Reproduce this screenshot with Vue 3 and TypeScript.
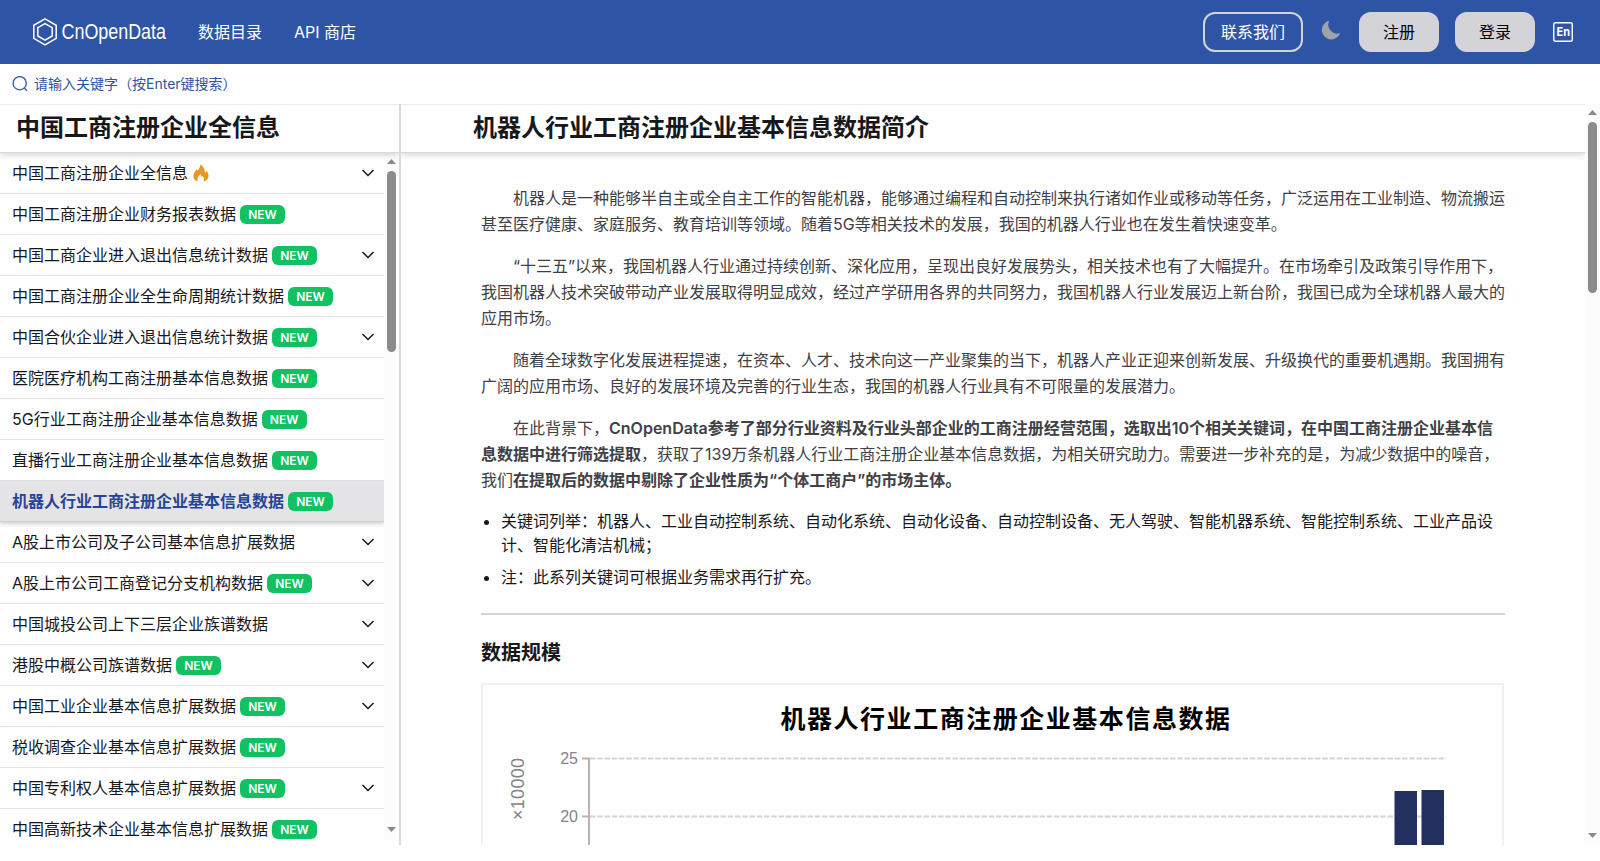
<script setup lang="ts">
interface Entry {
  name: string
  isNew?: boolean
  hot?: boolean
  expandable?: boolean
  active?: boolean
}

const entries: Entry[] = [
  { name: '中国工商注册企业全信息', hot: true, expandable: true },
  { name: '中国工商注册企业财务报表数据', isNew: true },
  { name: '中国工商企业进入退出信息统计数据', isNew: true, expandable: true },
  { name: '中国工商注册企业全生命周期统计数据', isNew: true },
  { name: '中国合伙企业进入退出信息统计数据', isNew: true, expandable: true },
  { name: '医院医疗机构工商注册基本信息数据', isNew: true },
  { name: '5G行业工商注册企业基本信息数据', isNew: true },
  { name: '直播行业工商注册企业基本信息数据', isNew: true },
  { name: '机器人行业工商注册企业基本信息数据', isNew: true, active: true },
  { name: 'A股上市公司及子公司基本信息扩展数据', expandable: true },
  { name: 'A股上市公司工商登记分支机构数据', isNew: true, expandable: true },
  { name: '中国城投公司上下三层企业族谱数据', expandable: true },
  { name: '港股中概公司族谱数据', isNew: true, expandable: true },
  { name: '中国工业企业基本信息扩展数据', isNew: true, expandable: true },
  { name: '税收调查企业基本信息扩展数据', isNew: true },
  { name: '中国专利权人基本信息扩展数据', isNew: true, expandable: true },
  { name: '中国高新技术企业基本信息扩展数据', isNew: true },
]
</script>

<template>
  <div class="page" lang="zh-CN">
    <header class="topbar">
      <svg class="logo" width="140" height="32" viewBox="0 0 140 32" fill="none">
        <path d="M13 2.900 24.200 9.300v13.100L13 28.800 1.800 22.400V9.300z" stroke="#fff" stroke-width="1.500" />
        <path d="M13 7.600 20.200 11.700v8.300L13 24.100 5.800 20v-8.300z" stroke="#fff" stroke-width="1.500" />
        <text x="29.500" y="23.300" font-size="22" fill="#fff" textLength="104.500" lengthAdjust="spacingAndGlyphs">CnOpenData</text>
      </svg>
      <nav class="nav">
        <a>数据目录</a>
        <a>API 商店</a>
      </nav>
      <div class="actions">
        <button class="contact">联系我们</button>
        <svg class="moon" width="20" height="20" viewBox="0 0 20 20">
          <path d="M8.300.8A9.400 9.400 0 1 0 19.200 13 8.800 8.800 0 0 1 8.300.8z" fill="#a1a1aa" />
        </svg>
        <button class="solid">注册</button>
        <button class="solid">登录</button>
        <svg class="lang" width="20" height="20" viewBox="0 0 20 20">
          <rect x=".75" y=".75" width="18.500" height="18.500" rx="1.500" fill="none" stroke="#fff" stroke-width="1.400" />
          <text x="3.500" y="14.300" font-size="11.500" font-weight="700" fill="#fff" textLength="13.500" lengthAdjust="spacingAndGlyphs">En</text>
        </svg>
      </div>
    </header>

    <div class="search">
      <svg width="17" height="17" viewBox="0 0 17 17" fill="none" stroke="#2e55a5" stroke-width="1.300">
        <circle cx="7.700" cy="7.200" r="6.600" />
        <path d="m12.300 12.100 2.700 2.700" />
      </svg>
      <span>请输入关键字（按Enter键搜索）</span>
    </div>

    <div class="columns">
      <aside class="sidebar">
        <h2 class="side-title">中国工商注册企业全信息</h2>
        <div class="scroll-area">
          <ul class="entries">
            <li v-for="e in entries" :key="e.name" :class="{ active: e.active }">
              <span class="name">{{ e.name }}</span>
              <svg v-if="e.hot" class="fire" width="16" height="18" viewBox="0 0 16 18">
                <path d="M7.200.2c.4 2.900-1.100 4.500-2.500 6.300L3.800 5.300C2.100 7.400.4 9.300.4 11.900c0 2.800 1.600 4.900 4.300 5.700-.9-2.700-.2-4.800 3-7.500.1 1.700.6 2.500 1.300 2.800l.8-.8c1.200 1.800 1.500 3.600.9 5.500 2.900-.8 4.800-2.900 4.800-5.700 0-2-.8-3.600-2-5.100-.2 1-.7 1.700-1.400 2.200C12 5.400 10.400 2 7.200.2z" fill="#eb961e" />
              </svg>
              <b v-if="e.isNew" class="tag">NEW</b>
              <svg v-if="e.expandable" class="chevron" width="14" height="8" viewBox="0 0 14 8">
                <path d="m1.500 1 5.500 5.500L12.500 1" fill="none" stroke="#18181b" stroke-width="1.500" />
              </svg>
            </li>
          </ul>
          <div class="scrollbar side-bar"><i class="up" /><i class="thumb" /><i class="down" /></div>
        </div>
      </aside>

      <main class="main">
        <div class="body">
          <h1 class="title">机器人行业工商注册企业基本信息数据简介</h1>
          <article class="article">
            <p>机器人是一种能够半自主或全自主工作的智能机器，能够通过编程和自动控制来执行诸如作业或移动等任务，广泛运用在工业制造、物流搬运甚至医疗健康、家庭服务、教育培训等领域。随着5G等相关技术的发展，我国的机器人行业也在发生着快速变革。</p>
            <p>“十三五”以来，我国机器人行业通过持续创新、深化应用，呈现出良好发展势头，相关技术也有了大幅提升。在市场牵引及政策引导作用下，我国机器人技术突破带动产业发展取得明显成效，经过产学研用各界的共同努力，我国机器人行业发展迈上新台阶，我国已成为全球机器人最大的应用市场。</p>
            <p>随着全球数字化发展进程提速，在资本、人才、技术向这一产业聚集的当下，机器人产业正迎来创新发展、升级换代的重要机遇期。我国拥有广阔的应用市场、良好的发展环境及完善的行业生态，我国的机器人行业具有不可限量的发展潜力。</p>
            <p>在此背景下，<strong>CnOpenData参考了部分行业资料及行业头部企业的工商注册经营范围，选取出10个相关关键词，在中国工商注册企业基本信息数据中进行筛选提取</strong>，获取了139万条机器人行业工商注册企业基本信息数据，为相关研究助力。需要进一步补充的是，为减少数据中的噪音，我们<strong>在提取后的数据中剔除了企业性质为“个体工商户”的市场主体。</strong></p>
            <ul class="notes">
              <li>关键词列举：机器人、工业自动控制系统、自动化系统、自动化设备、自动控制设备、无人驾驶、智能机器系统、智能控制系统、工业产品设计、智能化清洁机械；</li>
              <li>注：此系列关键词可根据业务需求再行扩充。</li>
            </ul>
            <hr />
            <h3>数据规模</h3>
            <div class="chart">
              <svg width="1019" height="300" viewBox="0 0 1019 300">
                <text class="chart-title" x="297.500" y="43" textLength="449.500">机器人行业工商注册企业基本信息数据</text>
                <g stroke="#d4d4d4" stroke-width="2" stroke-dasharray="5.500 1.750">
                  <path d="M107 73.500H963" />
                  <path d="M107 131.500H963" />
                </g>
                <path d="M99 73.500h8M99 131.500h8M106 73v220" fill="none" stroke="#b5b5b5" stroke-width="2" />
                <g class="axis">
                  <text x="95" y="79" text-anchor="end">25</text>
                  <text x="95" y="137" text-anchor="end">20</text>
                  <text class="unit" transform="translate(41 135) rotate(-90)" textLength="62">×10000</text>
                </g>
                <rect x="911.500" y="106" width="22.500" height="194" fill="#22305f" />
                <rect x="938.500" y="105" width="22.500" height="195" fill="#22305f" />
              </svg>
            </div>
          </article>
        </div>
        <div class="scrollbar main-bar"><i class="up" /><i class="thumb" /><i class="down" /></div>
      </main>
    </div>
  </div>
</template>

<style>
body {
  margin: 0;
  overflow: hidden;
}
</style>

<style scoped>
.page {
  width: 1600px;
  height: 861px;
  overflow: hidden;
  display: flex;
  flex-direction: column;
  background: #fefefe;
  color: #18181b;
  font: 16px/24px Inter, "Noto Sans CJK SC", sans-serif;
}
.page * {
  box-sizing: border-box;
}
.topbar {
  flex: 0 0 64px;
  display: flex;
  align-items: center;
  padding: 0 27px 0 32px;
  background: #2e55a5;
  color: #fff;
}
.logo {
  font-family: "Liberation Sans", sans-serif;
}
.nav {
  display: flex;
  gap: 32px;
  margin-left: 26px;
}
.actions {
  display: flex;
  align-items: center;
  margin-left: auto;
}
button {
  height: 40px;
  padding: 0;
  border: 0;
  border-radius: 12px;
  font: inherit;
}
.contact {
  width: 100px;
  border: 2px solid #d4d4d8;
  background: transparent;
  color: #fff;
}
.moon {
  margin: 0 18px;
  transform: translateY(-2px);
}
.solid {
  width: 80px;
  margin-right: 16px;
  background: #d4d4d8;
  color: #000;
}
.lang {
  margin-left: 2px;
}
.search {
  flex: 0 0 40px;
  display: flex;
  align-items: center;
  gap: 5px;
  padding-left: 12px;
  color: #2e55a5;
  font-size: 14px;
}
.columns {
  flex: 0 0 741px;
  display: flex;
  overflow: hidden;
  box-shadow: inset 0 1px #ececec;
}
.sidebar {
  width: 401px;
  flex: none;
  border-right: 2px solid #d8d8d8;
}
.side-title,
.title {
  position: relative;
  z-index: 1;
  height: 48px;
  margin: 0;
  font-size: 24px;
  line-height: 48px;
  font-weight: 600;
  box-shadow: 0 1px #d8d8d8, 0 3px 6px rgba(0, 0, 0, .16);
  clip-path: inset(0 0 -12px 0);
}
.side-title {
  padding-left: 16px;
}
.title {
  padding-left: 72px;
}
.scroll-area {
  display: flex;
  height: 687px;
  overflow: hidden;
}
.entries {
  width: 384px;
  margin: 0;
  padding: 1px 0 0;
  list-style: none;
}
.entries li {
  display: flex;
  align-items: center;
  height: 41px;
  padding: 0 9px 0 12px;
  border-bottom: 1px solid #e4e4e7;
}
.entries li.active {
  background: #e4e4e7;
  border-color: #d0d0d4;
  box-shadow: 0 2px 4px rgba(0, 0, 0, .18);
}
.active .name {
  color: #254596;
  font-weight: 600;
}
.fire {
  margin-left: 5px;
}
.tag {
  width: 45px;
  height: 19px;
  margin-left: 4px;
  border-radius: 6px;
  background: #12c161;
  color: #fff;
  font-size: 12px;
  line-height: 19px;
  font-weight: 600;
  text-align: center;
}
.chevron {
  margin-left: auto;
}
.scrollbar {
  flex: 0 0 15px;
  display: flex;
  flex-direction: column;
  align-items: center;
  background: #fcfcfc;
}
.scrollbar i {
  width: 9px;
  flex: none;
}
.up {
  height: 5px;
  background: #8a8a8a;
  clip-path: polygon(50% 0, 100% 100%, 0 100%);
}
.down {
  height: 5px;
  margin-top: auto;
  background: #8a8a8a;
  clip-path: polygon(0 0, 100% 0, 50% 100%);
}
.thumb {
  margin-top: 7px;
  border-radius: 5px;
  background: #8b8b8b;
}
.side-bar {
  padding: 7px 0;
}
.side-bar .thumb {
  height: 181px;
}
.main-bar {
  padding: 6px 0 7px;
}
.main-bar .thumb {
  height: 171px;
}
.main {
  flex: 1;
  display: flex;
}
.body {
  flex: 1;
}
.article {
  width: 1024px;
  height: 693px;
  margin-left: 80px;
  padding-top: 33px;
  overflow: hidden;
}
.article p {
  margin: 0 0 16px;
  color: #3f3f46;
  line-height: 26px;
  text-indent: 2em;
}
.article strong {
  font-weight: 600;
}
.notes {
  margin: 0;
  padding-left: 20px;
}
.notes li + li {
  margin-top: 8px;
}
hr {
  height: 2px;
  margin: 24px 0;
  border: 0;
  background: #d4d4d8;
}
h3 {
  margin: 0 0 16px;
  font-size: 20px;
  line-height: 28px;
  font-weight: 600;
}
.chart {
  width: 1023px;
  border: 2px solid #f1f1f1;
}
.chart svg {
  display: block;
}
.chart-title {
  font: 700 25px "Noto Sans CJK SC", sans-serif;
  fill: #000;
}
.axis {
  font: 16px "Liberation Sans", sans-serif;
  fill: #858585;
}
.unit {
  font-size: 18px;
}
</style>
